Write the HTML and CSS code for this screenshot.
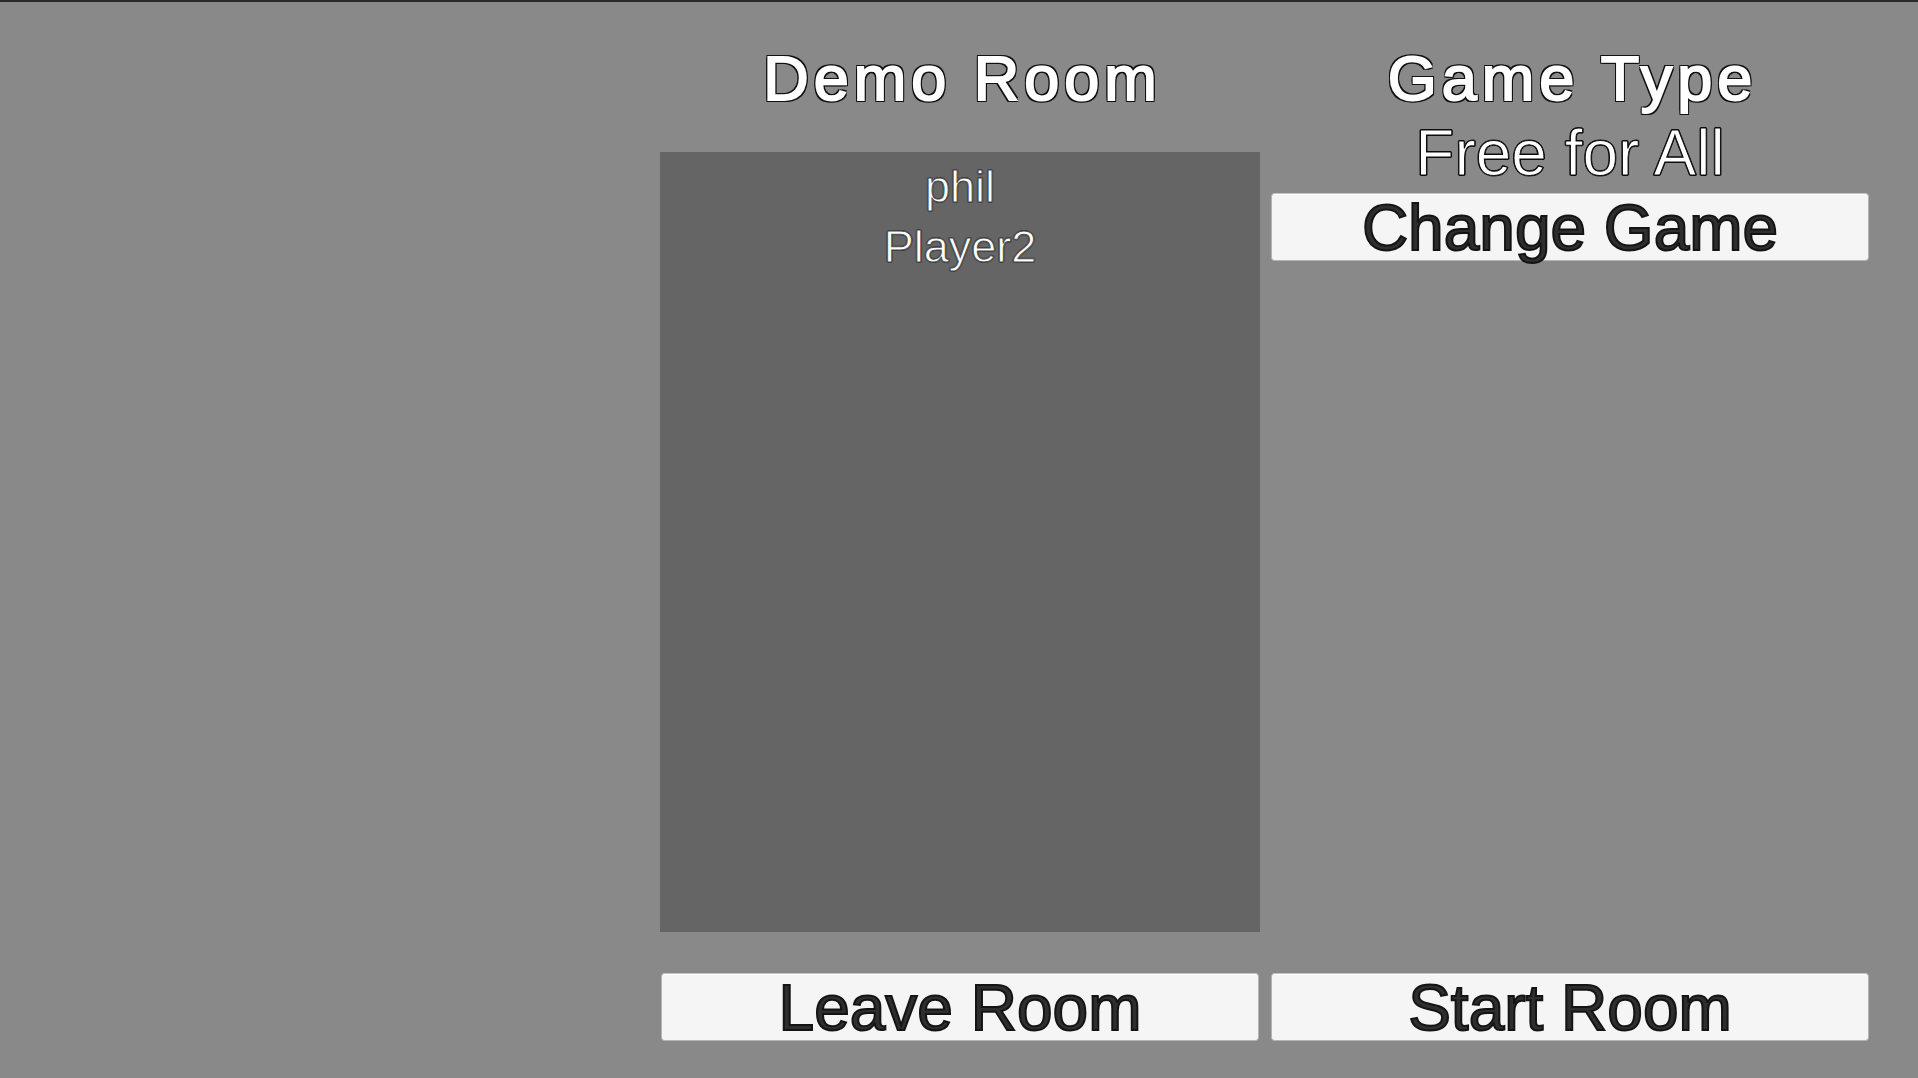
FILE: index.html
```html
<!DOCTYPE html>
<html lang="en">
<head>
<meta charset="utf-8">
<meta name="viewport" content="width=device-width, initial-scale=1">
<title>Demo Room</title>
<link rel="stylesheet" href="styles.css">
</head>
<body>
<main class="lobby">
  <section class="column room">
    <h1 class="heading">Demo Room</h1>
    <ul class="players">
      <li>phil</li>
      <li>Player2</li>
    </ul>
    <button class="button" type="button">Leave Room</button>
  </section>
  <section class="column game">
    <h2 class="heading">Game Type</h2>
    <p class="mode">Free for All</p>
    <button class="button" type="button">Change Game</button>
    <button class="button start" type="button">Start Room</button>
  </section>
</main>
</body>
</html>
```
FILE: styles.css
```css
* {
  box-sizing: border-box;
}

body {
  margin: 0;
  background: #898989;
  color: #fff;
  font-family: "Liberation Sans", Arial, sans-serif;
}

.lobby {
  display: grid;
  grid-template-columns: repeat(3, 1fr);
  gap: 10px;
  min-height: 100vh;
  padding: 39px 48px 37px 50px;
  border-top: 2px solid #292929;
}

.column {
  display: flex;
  flex-direction: column;
}

.room {
  grid-column: 2;
}

.heading,
.mode {
  margin: 0;
  font-size: 64px;
  font-weight: 400;
  line-height: 75px;
  text-align: center;
}

.heading {
  padding-left: 5px;
  font-size: 63px;
  letter-spacing: 5px;
  -webkit-text-stroke: 2px #fff;
  text-shadow: 2px 0 #111, -2px 0 #111, 0 2px #111, 0 -2px #111,
    2px 2px #111, -2px -2px #111, 2px -2px #111, -2px 2px #111;
}

.mode {
  -webkit-text-stroke: 1px #0a0a0a;
  text-shadow: 1px 0 #111, -1px 0 #111, 0 1px #111, 0 -1px #111;
}

.players {
  flex: 1;
  margin: 36px 0 41px;
  padding: 5px 0;
  background: #656565;
  list-style: none;
  font-size: 45px;
  line-height: 60px;
  text-align: center;
  text-shadow: 1px 0 #333, -1px 0 #333, 0 1px #333, 0 -1px #333;
  -webkit-text-stroke: 1px #505050;
}

.button {
  height: 68px;
  margin: 0 1px;
  padding: 1px 0 0;
  border: 1px solid #b4b4b4;
  border-top-color: #c4c4c4;
  border-radius: 4px;
  background: #f5f5f5;
  box-shadow: inset 0 1px #fff;
  color: #2e2e2e;
  font-family: inherit;
  font-size: 64px;
  line-height: 66px;
  -webkit-text-stroke: 2px #141414;
  cursor: pointer;
}

.mode + .button {
  margin-top: 2px;
}

.start {
  margin-top: auto;
}
```
